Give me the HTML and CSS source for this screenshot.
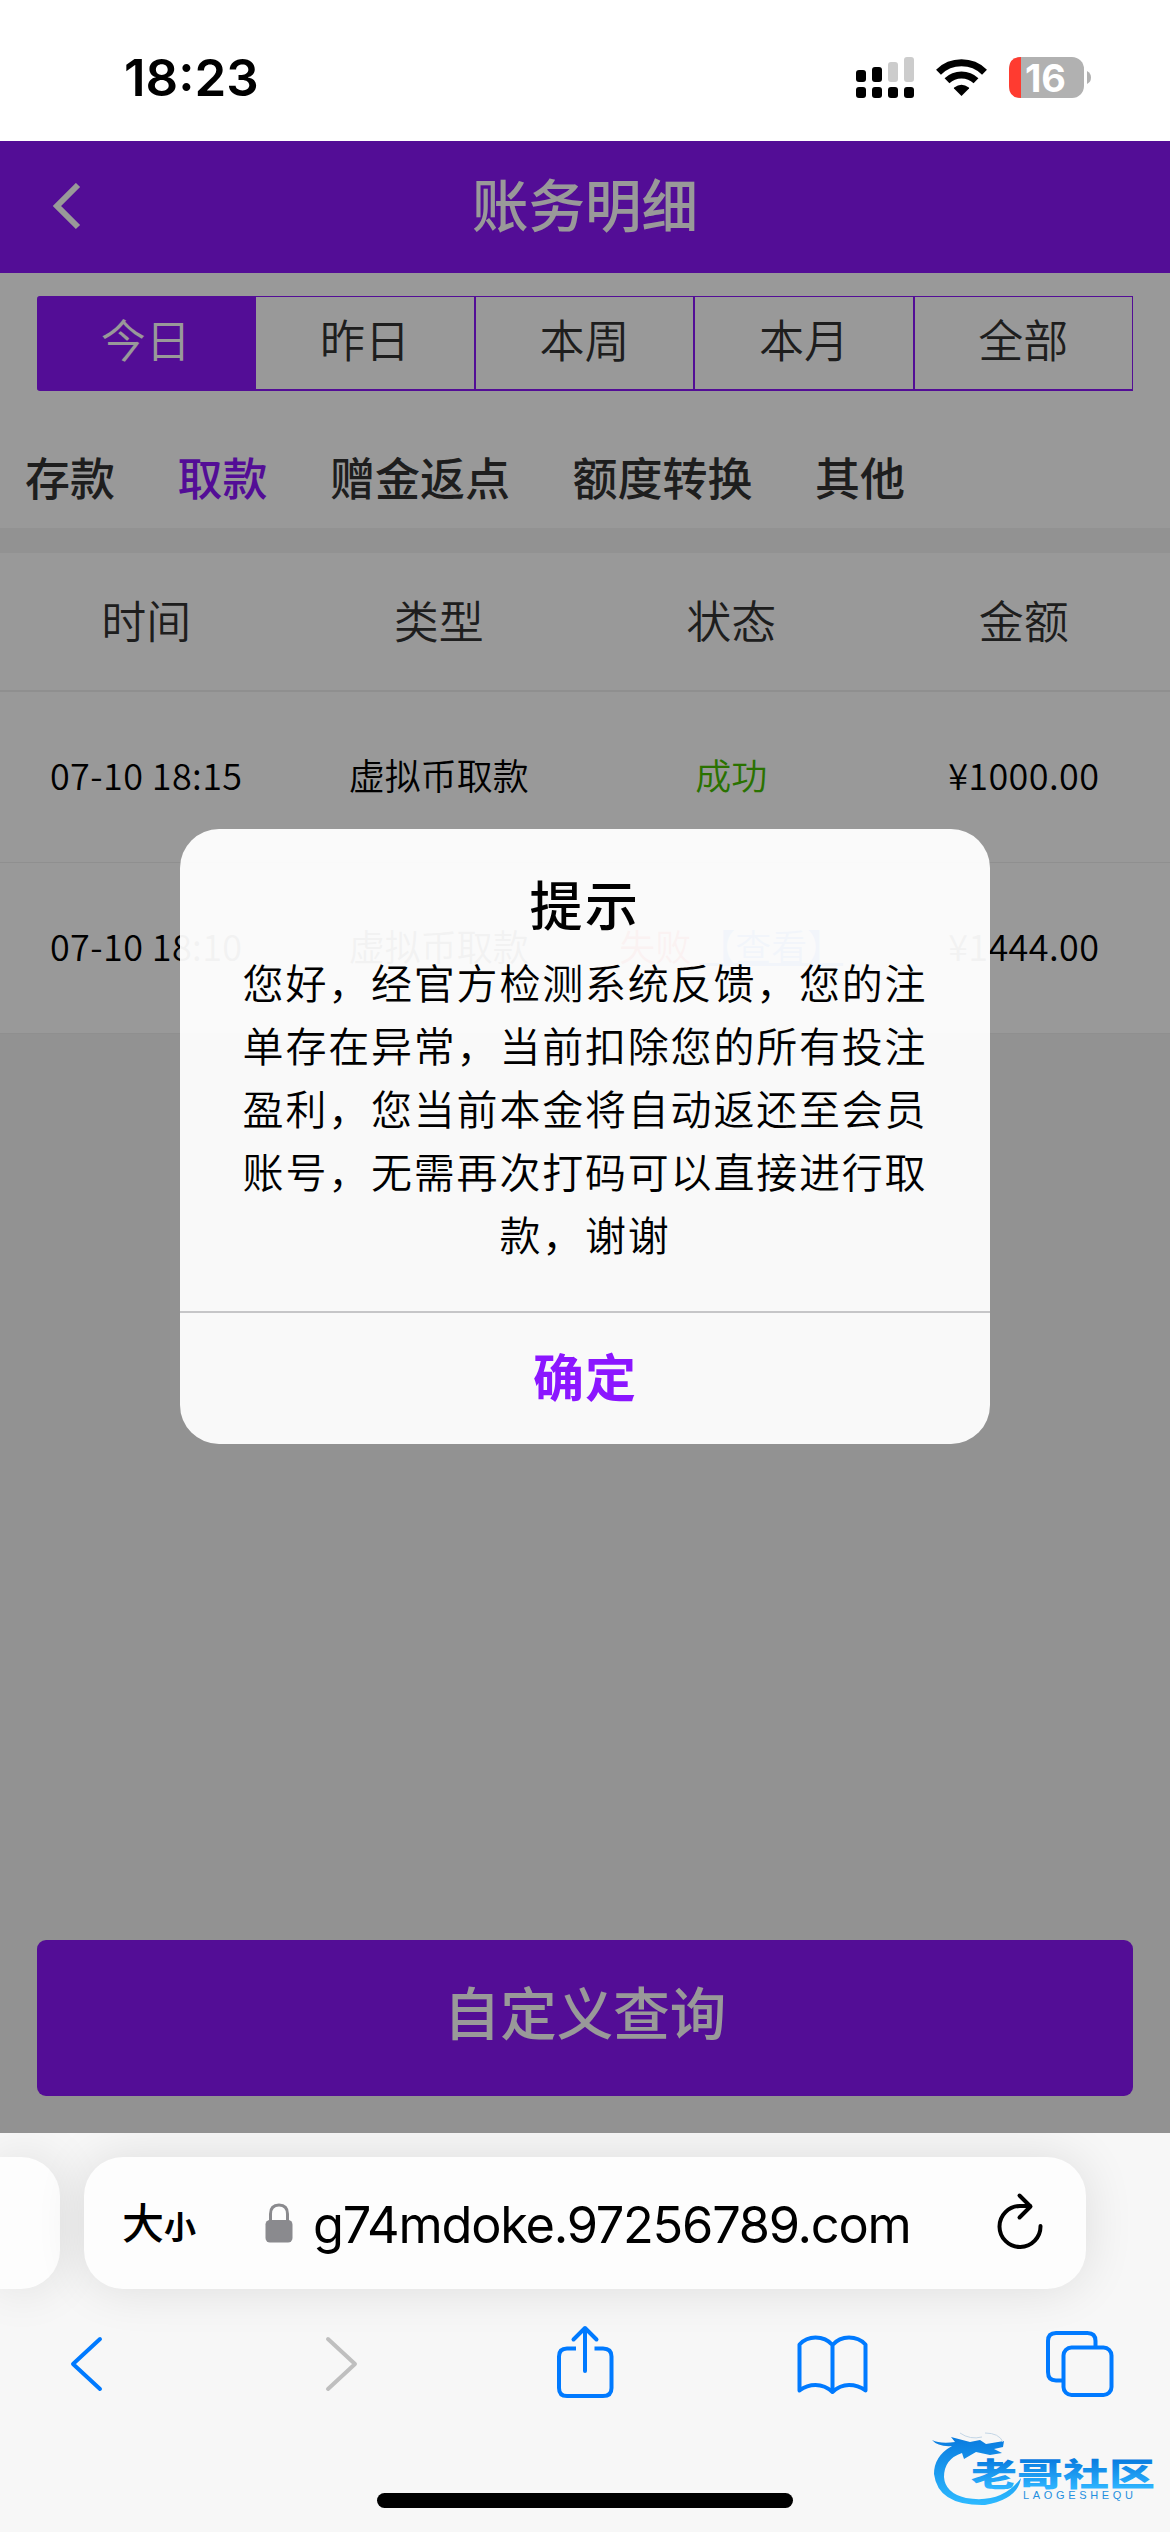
FILE: index.html
```html
<!DOCTYPE html>
<html lang="zh-CN">
<head>
<meta charset="utf-8">
<title>账务明细</title>
<link rel="stylesheet" href="styles.css">
</head>
<body>
<div class="status">
  <div class="clock">18:23</div>
  <svg class="status-icons" width="240" height="44" viewBox="0 0 240 44">
    <g fill="#000"><rect x="1" y="14" width="10" height="12" rx="3"/><rect x="17" y="11" width="10" height="15" rx="3"/><rect x="1" y="31" width="10" height="11" rx="3"/><rect x="17" y="31" width="10" height="11" rx="3"/><rect x="33" y="31" width="10" height="11" rx="3"/><rect x="49" y="31" width="10" height="11" rx="3"/></g>
    <g fill="#ccc"><rect x="33" y="6" width="10" height="20" rx="3"/><rect x="49" y="1" width="10" height="25" rx="3"/></g>
    <path d="M83.500 16.200A33 33 0 0 1 129.500 16.200" fill="none" stroke="#000" stroke-width="7"/>
    <path d="M92 24.800A21 21 0 0 1 121 24.800" fill="none" stroke="#000" stroke-width="7"/>
    <path d="M106.500 40L99 32.500Q98.500 32 99.200 31.400Q106.500 26 113.800 31.400Q114.500 32 114 32.500Z"/>
    <rect x="154" y="1" width="75" height="41" rx="12" fill="#b1b1b1"/>
    <path d="M166 1V42Q154 42 154 30V13Q154 1 166 1Z" fill="#ff3b30"/>
    <path d="M232 15Q236 17 236 21.500Q236 26 232 28Z" fill="#b1b1b1"/>
    <text x="190.500" y="35.500" text-anchor="middle" class="battery">16</text>
  </svg>
</div>
<main class="page">
  <header class="topbar">
    <svg class="topbar-back" width="30" height="48" viewBox="0 0 30 48"><path d="M26 2L5 23L26 44" fill="none" stroke="#fff" stroke-width="6"/></svg>
    <h1>账务明细</h1>
  </header>
  <nav class="ranges"><span class="on">今日</span><span>昨日</span><span>本周</span><span>本月</span><span>全部</span></nav>
  <nav class="kinds"><span>存款</span><span class="on">取款</span><span>赠金返点</span><span>额度转换</span><span>其他</span></nav>
  <section class="table">
    <div class="row head"><span>时间</span><span>类型</span><span>状态</span><span>金额</span></div>
    <div class="row"><span class="num">07-10 18:15</span><span>虚拟币取款</span><span class="ok">成功</span><span class="num">¥1000.00</span></div>
    <div class="row"><span class="num">07-10 18:10</span><span>虚拟币取款</span><span class="fail">失败 <a>【查看】</a></span><span class="num">¥1444.00</span></div>
  </section>
  <button class="query">自定义查询</button>
  <div class="mask">
    <div class="dialog">
      <h2>提示</h2>
      <p>您好，经官方检测系统反馈，您的注单存在异常，当前扣除您的所有投注盈利，您当前本金将自动返还至会员账号，无需再次打码可以直接进行取款，谢谢</p>
      <button class="confirm">确定</button>
    </div>
  </div>
</main>
<footer class="browser">
  <div class="tabs">
    <div class="prev"></div>
    <div class="address">
      <div class="size"><span class="big">大</span><span class="small">小</span></div>
      <svg class="lock" width="28" height="40" viewBox="0 0 28 40"><path d="M5.500 20V11Q5.500 2 14 2Q22.500 2 22.500 11V20" fill="none" stroke="#8a8a8e" stroke-width="3"/><rect x="0.500" y="17" width="27" height="22.500" rx="4.500" fill="#8a8a8e"/></svg>
      <span class="url">g74mdoke.97256789.com</span>
      <svg class="reload" width="48" height="58" viewBox="0 0 48 58"><g fill="none" stroke="#000" stroke-width="4" stroke-linecap="round" stroke-linejoin="round"><path d="M43.500 34A20.500 20.500 0 1 1 23 14H33"/><path d="M22.500 3.500L33.500 14.500L22.500 25.500"/></g></svg>
    </div>
  </div>
  <div class="tools">
    <svg width="1170" height="90" viewBox="0 2320 1170 90">
      <g fill="none" stroke="#007aff" stroke-width="4" stroke-linecap="round" stroke-linejoin="round">
        <path d="M100 2339L73 2364L100 2389"/>
        <path d="M328 2339L355 2364L328 2389" stroke="#bfbfbf"/>
        <path d="M576 2348.500H567Q559 2348.500 559 2356.500V2388Q559 2396 567 2396H603Q611.500 2396 611.500 2388V2356.500Q611.500 2348.500 603 2348.500H594.500" stroke-linecap="butt"/>
        <path d="M585 2371V2328M573.500 2339.500L585 2328L596.500 2339.500"/>
        <path d="M832.500 2345V2392Q825 2385 815.500 2385Q807 2385 799.500 2390.500V2344.500Q806 2337.500 815.500 2337.500Q826 2337.500 832.500 2345Q839 2337.500 849 2337.500Q859 2337.500 865.500 2344.500V2390.500Q858 2385 849 2385Q840 2385 832.500 2392"/>
        <rect x="1063.500" y="2347.500" width="48" height="47.500" rx="8"/>
        <path d="M1095.500 2347V2341Q1095.500 2333 1087.500 2333H1056Q1048 2333 1048 2341V2372Q1048 2380.500 1056 2380.500H1063"/>
      </g>
    </svg>
  </div>
  <div class="home"></div>
  <svg class="mark" width="230" height="84" viewBox="930 2426 230 84">
    <defs><linearGradient id="g" gradientUnits="userSpaceOnUse" x1="0" y1="2440" x2="0" y2="2504"><stop offset="0" stop-color="#0a7de0"/><stop offset="1" stop-color="#2db9ff"/></linearGradient>
    <linearGradient id="t" gradientUnits="userSpaceOnUse" x1="0" y1="2460" x2="0" y2="2488"><stop offset="0" stop-color="#0a7de0"/><stop offset="1" stop-color="#2db4ff"/></linearGradient></defs>
    <path fill="url(#g)" d="M932 2440Q940 2444 955 2442L951 2437L970 2442L980 2440L986 2444L1004 2441L1003 2447L994 2449L1002 2453L990 2455L976 2452L964 2459L962 2453Q944 2459 944 2477Q945 2493 966 2498Q1002 2504 1021 2478Q1018 2499 985 2505Q938 2506 934 2474Q934 2456 952 2446Q938 2447 932 2440Z"/>
    <path d="M960 2433Q970 2440 982 2437M985 2433Q999 2433 1003 2442" fill="none" stroke="#c4d6e6" stroke-width="1"/>
    <text x="971" y="2485.500" class="mark-cn" fill="url(#t)" textLength="184" lengthAdjust="spacingAndGlyphs">老哥社区</text>
    <text x="1023" y="2498.500" class="mark-en" fill="#1f8fe0" textLength="110" lengthAdjust="spacing">LAOGESHEQU</text>
  </svg>
</footer>
</body>
</html>
```
FILE: styles.css
```css
* { box-sizing: border-box; }
body {
  margin: 0;
  width: 1170px;
  height: 2532px;
  overflow: hidden;
  background: #fff;
  color: #000;
  font-family: "Noto Sans CJK SC", sans-serif;
}
h1, h2, p { margin: 0; }
button { border: 0; padding: 0; font-family: inherit; }
svg { display: block; flex: none; }

.status {
  height: 141px;
  display: flex;
  justify-content: space-between;
  align-items: flex-start;
  padding: 56px 75px 0 124px;
}
.clock { font: 600 51px/44px Inter, sans-serif; }
.battery { font: 700 38px Inter, sans-serif; fill: #fff; }

.page { position: relative; height: 1992px; background: #f3f3f3; }
.topbar {
  height: 132px;
  background: #8b16fa;
  display: flex;
  align-items: center;
  padding: 0 52px;
}
.topbar h1 {
  flex: 1;
  margin: -10px 30px 0 0;
  color: #fff;
  text-align: center;
  font-size: 56.5px;
  line-height: 80px;
  font-weight: 500;
}
.ranges {
  height: 118px;
  padding: 23px 37px 0;
  background: #fff;
  display: flex;
}
.ranges span {
  flex: 1;
  height: 95px;
  border: 1.5px solid #8b16fa;
  border-width: 1px 2px 2px 0;
  color: #333;
  font-size: 45px;
  line-height: 84px;
  font-weight: 350;
  text-align: center;
}
.ranges span:last-child { border-right-width: 1px; }
.ranges .on { background: #8b16fa; color: #fff; border-radius: 3px 0 0 3px; }
.kinds {
  height: 137px;
  padding: 41px 25px 0;
  background: #fff;
  display: flex;
  gap: 62.5px;
  color: #333;
  font-size: 45px;
  line-height: 90px;
  font-weight: 500;
}
.kinds .on { color: #8b16fa; }
.table { margin-top: 25px; background: #fff; }
.row {
  height: 171px;
  display: grid;
  grid-template-columns: repeat(4, 1fr);
  text-align: center;
  font-size: 36px;
  line-height: 165px;
  border-bottom: 1px solid #eee;
  font-weight: 350;
  white-space: nowrap;
}
.row.head { height: 139px; line-height: 133px; font-size: 45px; color: #333; border-bottom-width: 2px; }
.num { letter-spacing: .4px; }
.ok { color: #46be00; }
.fail { color: #f00; }
.fail a { color: #007aff; text-decoration: underline; }
.query {
  display: block;
  width: 1096px;
  height: 156px;
  margin: 906px auto 0;
  padding-bottom: 16px;
  border-radius: 9px;
  background: #8b16fa;
  color: #fff;
  font-size: 56.5px;
  font-weight: 500;
}
.mask {
  position: absolute;
  inset: 0;
  background: rgba(0, 0, 0, .4);
  display: flex;
  justify-content: center;
  align-items: flex-start;
  padding-top: 688px;
}
.dialog {
  width: 810px;
  height: 615px;
  border-radius: 39px;
  background: rgba(255, 255, 255, .95);
  text-align: center;
  display: flex;
  flex-direction: column;
}
.dialog h2 {
  margin-top: 34px;
  font-size: 53px;
  line-height: 80px;
  font-weight: 500;
  letter-spacing: 2.5px;
}
.dialog p {
  padding: 7px 60px 0;
  font-size: 41px;
  line-height: 63px;
  letter-spacing: 1.8px;
  font-weight: 350;
}
.confirm {
  margin-top: auto;
  height: 133px;
  padding-bottom: 8px;
  border-top: 2px solid #c6c6c8;
  background: none;
  color: #8b16ff;
  font-size: 51px;
  font-weight: 700;
  letter-spacing: 1px;
}

.browser { position: relative; height: 399px; background: #f7f7f7; overflow: hidden; }
.tabs { display: flex; gap: 24px; padding-top: 24px; }
.prev { width: 60px; height: 132px; border-radius: 0 39px 39px 0; background: #fdfdfd; box-shadow: 0 0 50px rgba(0, 0, 0, .11); }
.address {
  width: 1002px;
  height: 132px;
  border-radius: 39px;
  background: #fdfdfd;
  box-shadow: 0 0 50px rgba(0, 0, 0, .11);
  display: flex;
  align-items: center;
  padding-left: 38px;
}
.size { display: flex; align-items: baseline; width: 143px; line-height: 60px; }
.big { font-size: 42px; font-weight: 500; }
.small { font-size: 32px; font-weight: 700; }
.url { margin: 3px 0 0 20px; width: 684px; font: 400 50.5px/60px Inter, sans-serif; white-space: nowrap; letter-spacing: -1.25px; }
.reload { margin-top: -5px; }
.tools { margin-top: 31px; }
.home { width: 416px; height: 15px; margin: 83px auto 0; border-radius: 8px; background: #000; }
.mark { position: absolute; left: 930px; top: 293px; }
.mark-cn { font: 900 32px "Noto Sans CJK SC", sans-serif; }
.mark-en { font: 400 11px "Liberation Sans", sans-serif; }
```
